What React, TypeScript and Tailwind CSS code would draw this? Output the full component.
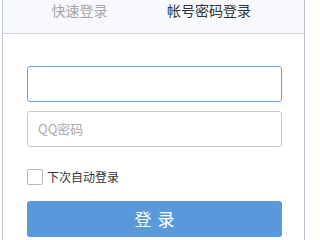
export default function App() {
  return (
    <div
      className="w-[320px] h-[240px] bg-white overflow-hidden"
      style={{ fontFamily: '"Microsoft YaHei", "Noto Sans CJK SC", sans-serif' }}
    >
      <div className="ml-[2px] w-[303px] h-[240px] border-x border-[#b9c4d0] flex flex-col">
        {/* Tabs */}
        <div className="h-[34px] bg-[#f7f9fd] border-b border-[#cfd6de] flex items-center text-[14px]">
          <div className="w-[153px] text-center text-[#a5a5a5] -mt-[12px]">快速登录</div>
          <div className="w-[106px] text-center text-[#333] -mt-[12px]">帐号密码登录</div>
        </div>

        <div className="px-[24px] pt-[32px]">
          <div className="h-[36px] w-[255px] border border-[#6a9fdb] rounded-[3px]"></div>
          <div className="mt-[9px] h-[36px] w-[255px] border border-[#c8c8c8] rounded-[3px] flex items-center pl-[10px] text-[13px] text-[#aaa]">
            QQ密码
          </div>

          <div className="mt-[21px] flex items-center gap-[4px]">
            <div className="w-[16px] h-[16px] border border-[#b8b8b8] rounded-[2px]"></div>
            <span className="text-[12px] text-[#333]">下次自动登录</span>
          </div>

          <div className="mt-[15px] h-[36px] w-[255px] bg-[#5a98dc] rounded-[3px] flex items-center justify-center text-white text-[17px] tracking-[6px] pl-[6px]">
            登录
          </div>
        </div>
      </div>
    </div>
  );
}
